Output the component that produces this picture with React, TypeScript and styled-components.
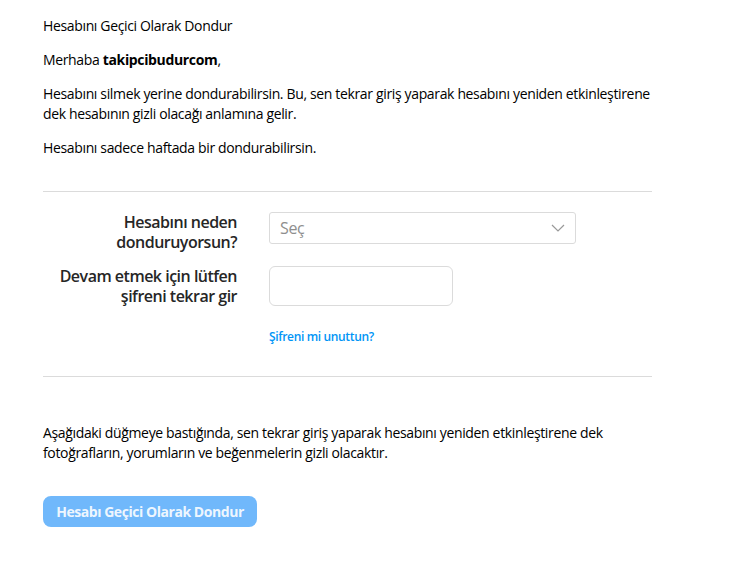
import React from 'react';
import styled, {createGlobalStyle} from "styled-components";

const GlobalStyle = createGlobalStyle`
  body {
    margin: 0;
    background: #ffffff;
    font-family: "Segoe UI", "Open Sans", "Noto Sans", sans-serif;
    letter-spacing: -0.35px;
    color: #262626;
  }
`

function App() {
    return (
        <Page>
            <GlobalStyle />
            <Intro>
                <Text>Hesabını Geçici Olarak Dondur</Text>
                <Text>Merhaba <b>takipcibudurcom</b>,</Text>
                <Text>Hesabını silmek yerine dondurabilirsin. Bu, sen tekrar giriş yaparak hesabını yeniden etkinleştirene dek hesabının gizli olacağı anlamına gelir.</Text>
                <Text>Hesabını sadece haftada bir dondurabilirsin.</Text>
            </Intro>
            <Divider />
            <Form>
                <Row>
                    <Label>Hesabını neden donduruyorsun?</Label>
                    <Select>
                        <span>Seç</span>
                        <svg width="14" height="8" viewBox="0 0 14 8" fill="none">
                            <path d="M1 1l6 6 6-6" stroke="#999" strokeWidth="1.2" />
                        </svg>
                    </Select>
                </Row>
                <Row>
                    <Label>Devam etmek için lütfen şifreni tekrar gir</Label>
                    <Field>
                        <Input type="password" />
                        <Forgot href="#">Şifreni mi unuttun?</Forgot>
                    </Field>
                </Row>
            </Form>
            <Divider />
            <Notice>Aşağıdaki düğmeye bastığında, sen tekrar giriş yaparak hesabını yeniden etkinleştirene dek fotoğrafların, yorumların ve beğenmelerin gizli olacaktır.</Notice>
            <Button disabled>Hesabı Geçici Olarak Dondur</Button>
        </Page>
    );
}

const Page = styled.div`
  width: 609px;
  padding: 16px 0 0 43px;
  font-size: 14px;
  line-height: 20px;
`

const Intro = styled.div`
  display: flex;
  flex-direction: column;
  gap: 14px;
  padding-bottom: 33px;
`

const Text = styled.p`
  margin: 0;
  color: #000;
  b {
    font-weight: 700;
  }
`

const Divider = styled.hr`
  border: none;
  border-top: 1px solid #dbdbdb;
  margin: 0;
`

const Form = styled.div`
  display: flex;
  flex-direction: column;
  gap: 14px;
  padding: 20px 0 32px;
`

const Row = styled.div`
  display: grid;
  grid-template-columns: 194px 307px;
  column-gap: 32px;
  align-items: start;
`

const Label = styled.label`
  text-align: right;
  font-weight: 600;
  font-size: 16px;
  line-height: 20px;
  letter-spacing: -0.5px;
  color: #262626;
`

const Select = styled.div`
  height: 32px;
  box-sizing: border-box;
  border: 1px solid #dbdbdb;
  border-radius: 3px;
  display: flex;
  align-items: center;
  justify-content: space-between;
  padding: 0 10px;
  font-size: 16px;
  color: #8e8e8e;
`

const Field = styled.div`
  display: flex;
  flex-direction: column;
  gap: 24px;
`

const Input = styled.input`
  width: 184px;
  height: 40px;
  box-sizing: border-box;
  border: 1px solid #dbdbdb;
  border-radius: 6px;
  background: #fff;
  outline: none;
`

const Forgot = styled.a`
  font-size: 12px;
  font-weight: 600;
  line-height: 14px;
  color: #0095f6;
  text-decoration: none;
`

const Notice = styled.p`
  margin: 46px 0 0;
  color: #000;
`

const Button = styled.button`
  margin-top: 33px;
  width: 214px;
  height: 31px;
  border: none;
  border-radius: 8px;
  background: #70b8fb;
  color: rgba(255, 255, 255, 0.9);
  font-family: inherit;
  font-size: 14px;
  font-weight: 700;
  letter-spacing: -0.45px;
  cursor: default;
`

export default App;
